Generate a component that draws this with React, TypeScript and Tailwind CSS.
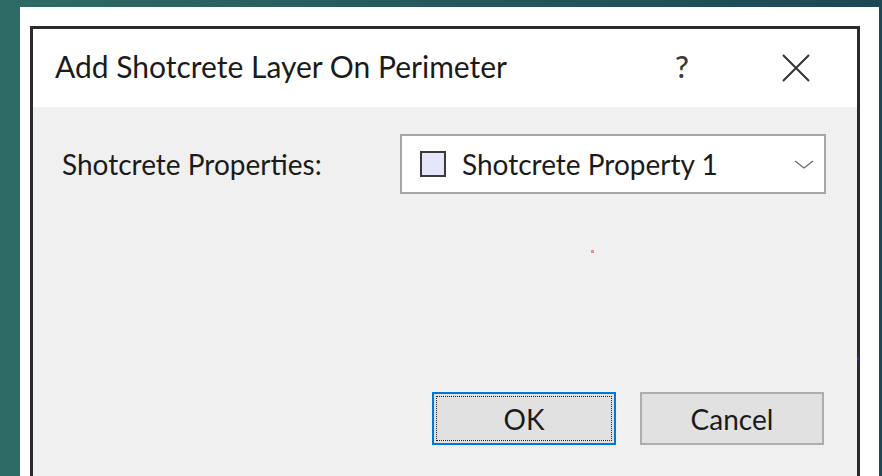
const ui = { fontFamily: 'Lato, "Open Sans", Arial, sans-serif' };

function Checkbox() {
  return <span className="block w-[26px] h-[26px] border-2 border-[#3a3a3a] bg-[#e6e6fa] shrink-0" />;
}

function Chevron() {
  return (
    <svg width="22" height="12" viewBox="0 0 22 12" fill="none" stroke="#6a6a6a" strokeWidth="1.3">
      <path d="M2 3 L11 10 L20 3" />
    </svg>
  );
}

function CloseGlyph() {
  return (
    <svg width="28" height="28" viewBox="0 0 28 28" fill="none" stroke="#333" strokeWidth="2">
      <path d="M1 1 L27 27 M27 1 L1 27" />
    </svg>
  );
}

export default function App() {
  return (
    <div
      className="w-[882px] h-[476px] overflow-hidden bg-gradient-to-r from-[#2f6b66] to-[#1c4753] flex flex-col pt-[7px] pl-[20px] pr-[3px]"
      style={ui}
    >
      {/* white frame around the captured window */}
      <div className="flex-1 bg-white flex flex-col pt-[19px] pl-[10px] pr-[19px]">
        <div className="flex-1 flex flex-col border-[3px] border-[#2b2b2b] border-b-0 shadow-[inset_1px_1px_0_#9a9a9a]">
          {/* title bar */}
          <div className="h-[78px] bg-white flex items-center pl-[22px] pb-[3px] text-[#1b1b1b]">
            <span className="text-[30px]">Add Shotcrete Layer On Perimeter</span>
            <span className="ml-auto text-[31px] font-medium text-[#3a3a3a] mr-[93px]">?</span>
            <span className="mr-[47px] mt-[2px]">
              <CloseGlyph />
            </span>
          </div>

          {/* body */}
          <div className="flex-1 bg-[#f0f0f0] flex flex-col relative">
            <div className="flex items-center mt-[27px]">
              <span className="ml-[29px] text-[28px] text-[#1b1b1b]">Shotcrete Properties:</span>
              <div className="ml-auto mr-[31px] w-[426px] h-[60px] bg-white border-2 border-[#a6a6a6] flex items-center pl-[18px] pr-[8px]">
                <Checkbox />
                <span className="ml-[16px] text-[28px] text-[#1b1b1b]">Shotcrete Property 1</span>
                <span className="ml-auto mr-[1px]">
                  <Chevron />
                </span>
              </div>
            </div>

            {/* stray pixels from the canvas behind */}
            <span className="absolute left-[558px] top-[143px] w-[3px] h-[3px] bg-[#f08a8a]" />
            <span className="absolute right-[-2px] top-[250px] w-[2px] h-[3px] bg-[#2a2ad0]" />

            <div className="mt-auto mb-[31px] flex justify-end gap-[24px] mr-[33px]">
              <button className="w-[184px] h-[53px] bg-[#e1e1e1] border-2 border-[#0078d7] p-[2px] text-[28px] text-[#1b1b1b]">
                <span className="flex h-full w-full items-center justify-center border border-dotted border-[#222]">OK</span>
              </button>
              <button className="w-[184px] h-[53px] bg-[#e1e1e1] border-2 border-[#adadad] text-[28px] text-[#1b1b1b]">
                Cancel
              </button>
            </div>
          </div>
        </div>
      </div>
    </div>
  );
}
